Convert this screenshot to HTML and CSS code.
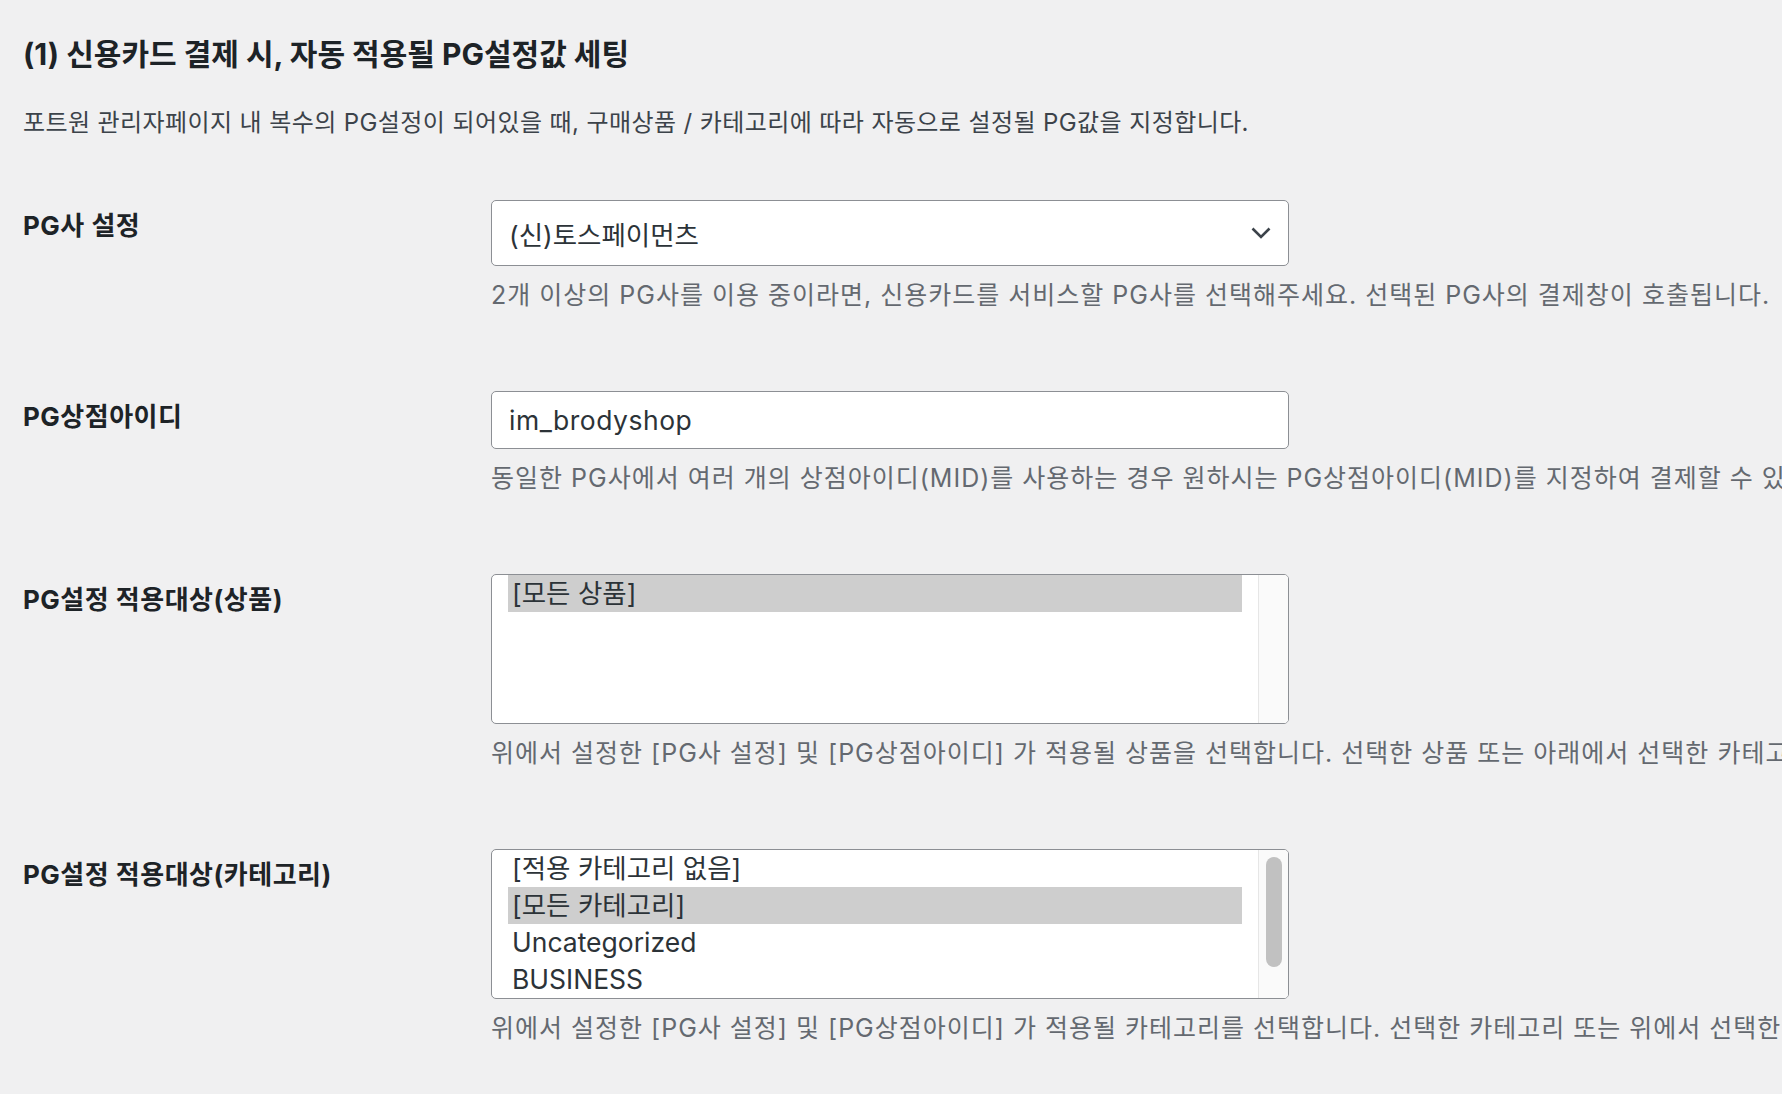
FILE: index.html
```html
<!DOCTYPE html>
<html lang="ko">
<head>
  <meta charset="UTF-8">
  <meta name="viewport" content="width=device-width, initial-scale=1.0">
  <title>PG설정값 세팅</title>
  <link rel="stylesheet" href="styles.css">
</head>
<body>
  <div class="wrap">
    <h2 class="section-title">(1) 신용카드 결제 시, 자동 적용될 PG설정값 세팅</h2>
    <p class="section-desc">포트원 관리자페이지 내 복수의 PG설정이 되어있을 때, 구매상품 / 카테고리에 따라 자동으로 설정될 PG값을 지정합니다.</p>

    <div class="form-rows">
      <div class="form-row">
        <div class="form-label">PG사 설정</div>
        <div class="form-field">
          <div class="select">
            <span>(신)토스페이먼츠</span>
            <svg class="chevron" width="20" height="12" viewBox="0 0 20 12">
              <path d="M1.5 1.5 L10 10 L18.5 1.5" fill="none" stroke="#3c434a" stroke-width="2.6"/>
            </svg>
          </div>
          <p class="help">2개 이상의 PG사를 이용 중이라면, 신용카드를 서비스할 PG사를 선택해주세요. 선택된 PG사의 결제창이 호출됩니다.</p>
        </div>
      </div>

      <div class="form-row">
        <div class="form-label">PG상점아이디</div>
        <div class="form-field">
          <input class="text-input" type="text" value="im_brodyshop">
          <p class="help">동일한 PG사에서 여러 개의 상점아이디(MID)를 사용하는 경우 원하시는 PG상점아이디(MID)를 지정하여 결제할 수 있습니다.</p>
        </div>
      </div>

      <div class="form-row">
        <div class="form-label">PG설정 적용대상(상품)</div>
        <div class="form-field">
          <div class="listbox">
            <div class="options">
              <div class="option selected">[모든 상품]</div>
            </div>
            <div class="scroll-track"></div>
          </div>
          <p class="help">위에서 설정한 [PG사 설정] 및 [PG상점아이디] 가 적용될 상품을 선택합니다. 선택한 상품 또는 아래에서 선택한 카테고리에 속한 상품 결제 시 적용됩니다.</p>
        </div>
      </div>

      <div class="form-row">
        <div class="form-label">PG설정 적용대상(카테고리)</div>
        <div class="form-field">
          <div class="listbox">
            <div class="options">
              <div class="option">[적용 카테고리 없음]</div>
              <div class="option selected">[모든 카테고리]</div>
              <div class="option">Uncategorized</div>
              <div class="option">BUSINESS</div>
            </div>
            <div class="scroll-track">
              <div class="scroll-thumb"></div>
            </div>
          </div>
          <p class="help">위에서 설정한 [PG사 설정] 및 [PG상점아이디] 가 적용될 카테고리를 선택합니다. 선택한 카테고리 또는 위에서 선택한 상품 결제 시 적용됩니다.</p>
        </div>
      </div>
    </div>
  </div>
</body>
</html>
```

FILE: styles.css
```css
body {
  margin: 0;
  background-color: #f0f0f1;
  color: #3c434a;
  font-family: Inter, "Noto Sans CJK KR", sans-serif;
  overflow: hidden;
}

.wrap {
  padding: 36px 0 0 23px;
  white-space: nowrap;
}

.section-title {
  margin: 0;
  font-size: 30px;
  line-height: 36px;
  font-weight: 700;
  color: #1d2327;
}

.section-desc {
  margin: 35px 0 0;
  font-size: 24px;
  line-height: 32px;
  letter-spacing: 0.4px;
  color: #3c434a;
}

.form-rows {
  display: flex;
  flex-direction: column;
  gap: 81px;
  margin-top: 61px;
}

.form-row {
  display: grid;
  grid-template-columns: 468px 1fr;
  align-items: start;
}

.form-label {
  padding-top: 11px;
  font-size: 26px;
  line-height: 30px;
  letter-spacing: 0.5px;
  font-weight: 700;
  color: #1d2327;
}

.form-field {
  min-width: 0;
}

/* controls */
.select,
.text-input,
.listbox {
  box-sizing: border-box;
  width: 798px;
  border: 1px solid #8c8f94;
  border-radius: 5px;
  background-color: #fff;
  color: #2c3338;
  font-size: 26.5px;
}

.select {
  display: flex;
  align-items: center;
  justify-content: space-between;
  height: 66px;
  padding: 0 17px 0 17px;
}

.chevron {
  display: block;
}

.text-input {
  display: block;
  height: 58px;
  padding: 0 17px;
  font-family: inherit;
  letter-spacing: 0.5px;
  outline: none;
}

.listbox {
  display: flex;
  height: 150px;
  overflow: hidden;
}

.options {
  flex: 1;
  padding: 0 16px;
}

.option {
  height: 37px;
  line-height: 36px;
  padding-left: 4px;
}

.option.selected {
  background-color: #cecece;
}

.scroll-track {
  width: 30px;
  border-left: 1px solid #e6e6e6;
  background-color: #fafafa;
  padding: 7px 0 0 7px;
  box-sizing: border-box;
}

.scroll-thumb {
  width: 16px;
  height: 110px;
  border-radius: 8px;
  background-color: #c1c1c1;
}

.help {
  margin: 14px 0 0;
  font-size: 25px;
  line-height: 30px;
  letter-spacing: 1px;
  color: #646970;
}
```
